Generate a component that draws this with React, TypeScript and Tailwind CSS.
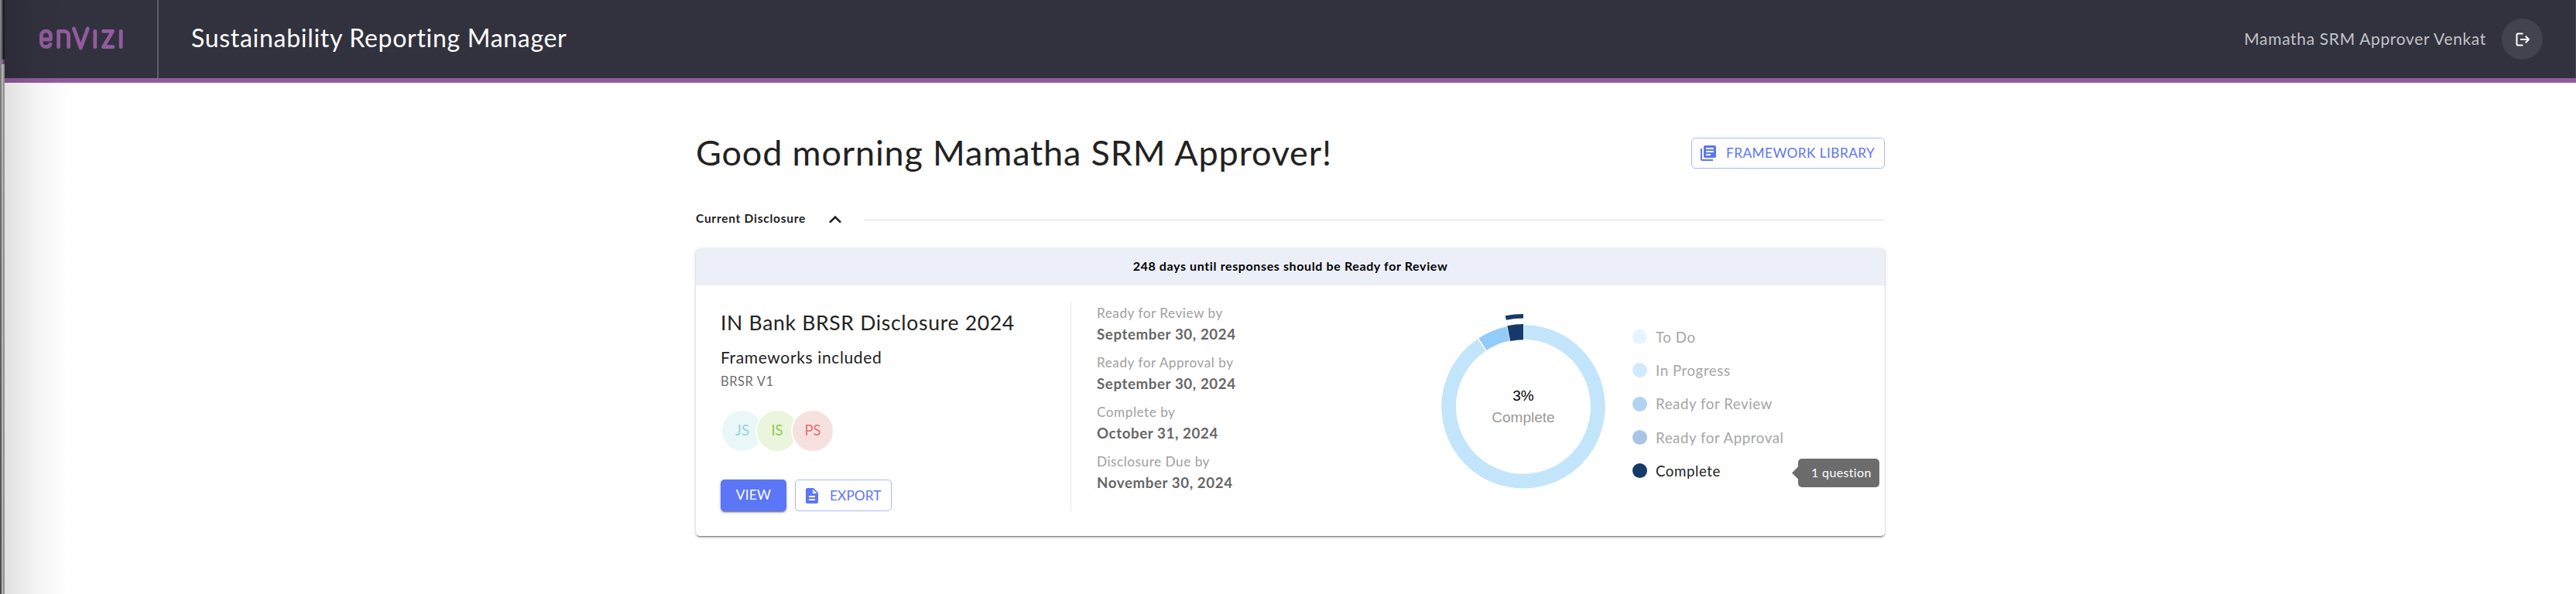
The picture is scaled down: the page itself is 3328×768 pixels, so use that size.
import { MdDescription, MdExpandLess, MdLibraryBooks } from "react-icons/md";

const milestones = [
  { label: "Ready for Review by", date: "September 30, 2024" },
  { label: "Ready for Approval by", date: "September 30, 2024" },
  { label: "Complete by", date: "October 31, 2024" },
  { label: "Disclosure Due by", date: "November 30, 2024" },
];

const statuses = [
  { label: "To Do", dot: "bg-[#e6f5ff]", text: "text-[#a6a6a6]" },
  { label: "In Progress", dot: "bg-[#d2e9fd]", text: "text-[#a6a6a6]" },
  { label: "Ready for Review", dot: "bg-[#b1d2f2]", text: "text-[#a6a6a6]" },
  { label: "Ready for Approval", dot: "bg-[#a9c4e5]", text: "text-[#a6a6a6]" },
  { label: "Complete", dot: "bg-[#163a69]", text: "text-[#222222]", tooltip: "1 question" },
];

const people = [
  { initials: "JS", style: "bg-[#eaf7f9] text-[#93d3da]" },
  { initials: "IS", style: "-ml-[11px] bg-[#eaf5dc] text-[#92c94a]" },
  { initials: "PS", style: "-ml-[10px] bg-[#f7e1df] text-[#e0736c]" },
];

function Logo() {
  return (
    <svg width="112" height="40" viewBox="0 0 112 40" fill="none" stroke="#935b9f" strokeWidth="4.8" strokeLinecap="round" strokeLinejoin="round">
      <path d="M5.5 21H17.4V16a6 5.9 0 0 0-12 0V25a5.8 5.8 0 0 0 6 5.5c3 0 5-1.200 5.600-3.200" />
      <path d="M27.600 30.700V10.300H34.600a6 6 0 0 1 6 6V30.700" />
      <path d="M47.400 7l8.900 25L65.300 7" />
      <path d="M74.800 10.300V30.700" />
      <path d="M85.600 10.300H97.600L85.600 30.700H97.800" />
      <path d="M108.200 10.300V30.700" />
    </svg>
  );
}

function Header() {
  return (
    <header className="flex h-[107px] items-stretch border-b-[6px] border-[#935b9f] bg-[#31323e]">
      <div className="flex w-[199px] items-center border-r-2 border-[#5b5c66] pb-[2px] pl-[42px]">
        <Logo />
      </div>
      <div className="flex flex-1 items-center pb-[3px] pl-[42px] text-[32px] tracking-[0.7px] text-white">
        Sustainability Reporting Manager
      </div>
      <div className="flex items-center border-r border-[#484955] pr-[42px]">
        <span className="mr-[20px] pb-[2px] text-[21px] tracking-[0.66px] text-[#c3c3c8]">Mamatha SRM Approver Venkat</span>
        <span className="flex size-[53px] items-center justify-center rounded-full bg-[#43434f]">
          <svg width="20" height="20" viewBox="0 0 20 20" fill="none" stroke="white" strokeWidth="2" strokeLinejoin="round">
            <path d="M10.5 2.5H4a1.5 1.5 0 0 0-1.5 1.5V16a1.5 1.5 0 0 0 1.5 1.5H10.5" />
            <path d="M7 10H18M13.8 5.8L18 10L13.8 14.2" />
          </svg>
        </span>
      </div>
    </header>
  );
}

/* Point on a circle centred in the chart; angle in degrees clockwise from the top. */
function point(r: number, angle: number) {
  const a = (angle * Math.PI) / 180;
  return `${(120 + r * Math.sin(a)).toFixed(2)} ${(120.8 - r * Math.cos(a)).toFixed(2)}`;
}

function slice(inner: number, outer: number, from: number, to: number) {
  const large = to - from > 180 ? 1 : 0;
  return `M${point(outer, from)}A${outer} ${outer} 0 ${large} 1 ${point(outer, to)}L${point(inner, to)}A${inner} ${inner} 0 ${large} 0 ${point(inner, from)}Z`;
}

function Donut() {
  return (
    <svg className="mt-[36px]" width="240" height="240" viewBox="0 0 240 240">
      <path d={slice(87, 105.7, 0.4, 326)} fill="#c2e5fb" />
      <path d={slice(87, 105.7, 326.9, 348.4)} fill="#94ccf9" />
      <path d={slice(86.5, 106.7, 348.8, 360)} fill="#163a69" />
      <path d={slice(114.2, 119.8, 348.8, 360)} fill="#163a69" />
      <text x="120" y="113" textAnchor="middle" fontSize="19" fill="#000000" className="font-['Liberation_Sans',sans-serif]">3%</text>
      <text x="120" y="141" textAnchor="middle" fontSize="19" fill="#999999" className="font-['Liberation_Sans',sans-serif]">Complete</text>
    </svg>
  );
}

function DisclosureCard() {
  return (
    <section className="mt-[21px] h-[372px] rounded-[5px] bg-white shadow-[0_3px_1px_-2px_rgba(0,0,0,0.3),0_2px_2px_0_rgba(0,0,0,0.2),0_1px_5px_0_rgba(0,0,0,0.14)]">
      <div className="flex h-12 items-center justify-center rounded-t-[5px] bg-[#eceff8] pb-[2px] text-[16px] font-bold tracking-[0.62px] text-black">
        248 days until responses should be Ready for Review
      </div>
      <div className="flex items-start pl-8 whitespace-nowrap">
        <div className="w-[452px] pt-[31px]">
          <h2 className="text-[26.5px] leading-[34px] tracking-[0.7px] text-[#222222]">IN Bank BRSR Disclosure 2024</h2>
          <h3 className="mt-[14px] text-[21px] leading-7 tracking-[0.64px] text-[#222222]">Frameworks included</h3>
          <p className="mt-[6px] text-[16.5px] leading-[22px] tracking-[0.55px] text-[#6f6f6f]">BRSR V1</p>
          <div className="mt-[25px] flex">
            {people.map((p) => (
              <span key={p.initials} className={`flex size-14 items-center justify-center rounded-full border-2 border-white pb-px text-[18.5px] ${p.style}`}>
                {p.initials}
              </span>
            ))}
          </div>
          <div className="mt-[35px] flex gap-[11px]">
            <button className="h-[41px] w-[85px] rounded-[5px] bg-[#5b76f7] pb-px text-[17.3px] tracking-[0.26px] text-white shadow-[0_3px_1px_-2px_rgba(0,0,0,0.3),0_2px_2px_0_rgba(0,0,0,0.2),0_1px_5px_0_rgba(0,0,0,0.14)]">
              VIEW
            </button>
            <button className="flex h-[41px] w-[125px] items-center rounded-[5px] border border-[#a9b7fb] pl-[9px] text-[17.3px] tracking-[0.1px] text-[#5b76f7]">
              <MdDescription className="mr-[11px] size-6" />
              EXPORT
            </button>
          </div>
        </div>
        <div className="mt-[21px] h-[271px] w-px bg-[#e8e8e8]" />
        <dl className="w-[464px] pt-6 pl-[33px]">
          {milestones.map((m) => (
            <div key={m.label} className="h-16">
              <dt className="text-[17.2px] leading-6 tracking-[0.52px] text-[#a0a0a0]">{m.label}</dt>
              <dd className="mt-px text-[18.7px] leading-7 font-bold tracking-[0.6px] text-[#666666]">{m.date}</dd>
            </div>
          ))}
        </dl>
        <Donut />
        <ul className="mt-[45px] ml-[21px]">
          {statuses.map((s) => (
            <li key={s.label} className="relative flex h-[43.3px] items-center gap-[11px]">
              <span className={`size-[19px] rounded-full ${s.dot}`} />
              <span className={`text-[18.7px] tracking-[0.55px] ${s.text}`}>{s.label}</span>
              {s.tooltip && (
                <span className="absolute top-[6px] left-[214px] flex h-[37px] w-[105px] items-center rounded-[5px] bg-[#6c6c6c] pb-px pl-[17px] text-[16px] tracking-[0.35px] text-white">
                  <svg className="absolute top-[10px] -left-2" width="9" height="17" viewBox="0 0 9 17">
                    <path d="M0 8.5L8 0.5H9V16.5H8Z" fill="#6c6c6c" />
                  </svg>
                  {s.tooltip}
                </span>
              )}
            </li>
          ))}
        </ul>
      </div>
    </section>
  );
}

export default function App() {
  return (
    <div className="flex h-[768px] w-full overflow-hidden bg-white font-[Lato,sans-serif]">
      <div className="flex w-[6px] shrink-0">
        <div className="w-[2px] bg-linear-to-b from-[#85858a] via-[#66666a] to-[#4c4c4e]" />
        <div className="flex w-1 flex-col">
          <div className="h-[77px] border-l-2 border-[#45464d] bg-[#1a1b26]" />
          <div className="h-[6px] border-l-2 border-[#86638e] bg-[#5e3f68]" />
          <div className="flex-1 border-l-2 border-[#b4b4b4] bg-[#929292]" />
        </div>
      </div>
      <div className="relative min-w-0 flex-1">
        <Header />
        <main className="mx-auto w-[1536px] pt-[71px]">
          <div className="flex h-10 items-center justify-between">
            <h1 className="pb-[3px] text-[45px] leading-[50px] tracking-[0.84px] text-[#222222]">Good morning Mamatha SRM Approver!</h1>
            <button className="flex h-10 w-[250px] items-center rounded-[5px] border border-[#a9b7fb] pl-[9px] text-[17.3px] tracking-[0.42px] text-[#5b76f7]">
              <MdLibraryBooks className="mr-[11px] size-6" />
              FRAMEWORK LIBRARY
            </button>
          </div>
          <div className="mt-[50px] flex h-8 items-center">
            <span className="w-[164px] pb-[2px] text-[15.5px] font-bold tracking-[0.74px] text-[#222222]">Current Disclosure</span>
            <MdExpandLess className="size-8 text-[#222222]" />
            <div className="ml-[21px] h-px flex-1 bg-[#e0e0e0]" />
          </div>
          <DisclosureCard />
        </main>
        <div className="pointer-events-none absolute inset-y-0 left-0 w-[84px] bg-linear-to-r from-black/12 via-black/5 via-45% to-transparent" />
      </div>
    </div>
  );
}
